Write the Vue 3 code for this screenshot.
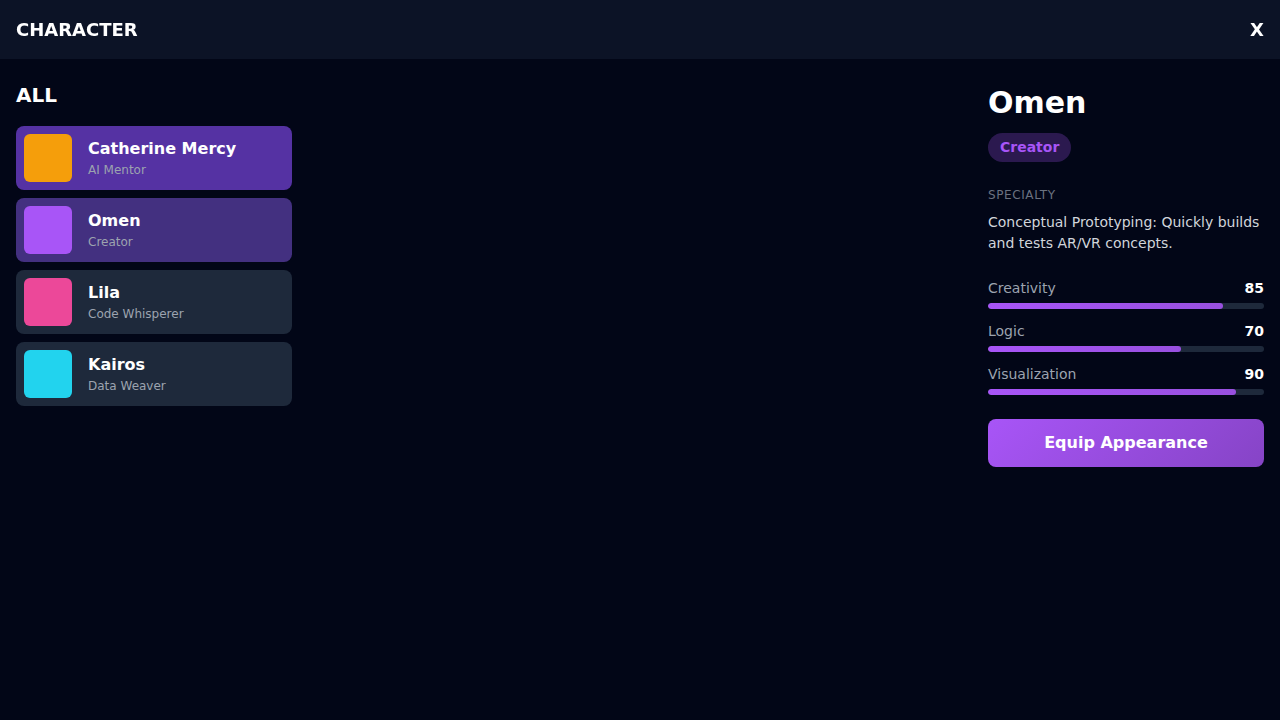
<script setup>
import { ref } from 'vue'

const characters = [
  { name: 'Catherine Mercy', role: 'AI Mentor', tone: 'amber', state: 'focused' },
  { name: 'Omen', role: 'Creator', tone: 'purple', state: 'selected' },
  { name: 'Lila', role: 'Code Whisperer', tone: 'pink', state: '' },
  { name: 'Kairos', role: 'Data Weaver', tone: 'cyan', state: '' }
]

const stats = ref([
  { label: 'Creativity', value: 85 },
  { label: 'Logic', value: 70 },
  { label: 'Visualization', value: 90 }
])
</script>

<template>
  <div class="screen">
    <header class="topbar">
      <h1 class="title">CHARACTER</h1>
      <button class="close" type="button" aria-label="Close">X</button>
    </header>

    <main class="layout">
      <section class="panel">
        <h2 class="group">ALL</h2>
        <ul class="list">
          <li v-for="c in characters" :key="c.name">
            <button type="button" class="card" :class="c.state">
              <span class="swatch" :class="c.tone"></span>
              <span class="info">
                <span class="name">{{ c.name }}</span>
                <span class="role">{{ c.role }}</span>
              </span>
            </button>
          </li>
        </ul>
      </section>

      <div class="stage"></div>

      <aside class="panel">
        <h2 class="hero">Omen</h2>
        <span class="badge">Creator</span>
        <h3 class="caption">SPECIALTY</h3>
        <p class="text">Conceptual Prototyping: Quickly builds and tests AR/VR concepts.</p>
        <div class="stats">
          <div v-for="s in stats" :key="s.label">
            <div class="row">
              <span class="label">{{ s.label }}</span>
              <span class="value">{{ s.value }}</span>
            </div>
            <div class="track">
              <div class="fill" :style="{ width: s.value + '%' }"></div>
            </div>
          </div>
        </div>
        <button type="button" class="equip">Equip Appearance</button>
      </aside>
    </main>
  </div>
</template>

<style>
body {
  margin: 0;
  background: #020617;
}
</style>

<style scoped>
.screen {
  min-height: 100vh;
  box-sizing: border-box;
  padding-top: 64px;
  background: #020617;
  color: #fff;
  font-family: "DejaVu Sans", sans-serif;
  font-size: 16px;
  line-height: 1.5;
}
h1, h2, h3, p, ul {
  margin: 0;
  padding: 0;
}
button {
  border: 0;
  margin: 0;
  font: inherit;
  color: inherit;
  cursor: pointer;
}
.topbar {
  position: fixed;
  top: 0;
  left: 0;
  right: 0;
  display: flex;
  justify-content: space-between;
  align-items: center;
  padding: 16px;
  background: rgba(15, 23, 42, 0.8);
  backdrop-filter: blur(8px);
}
.title,
.close {
  font-size: 18px;
  font-weight: 700;
  line-height: 27px;
}
.close {
  padding: 0;
  background: none;
}
.layout {
  display: grid;
  grid-template-columns: 308px 1fr 308px;
}
.panel {
  padding: 16px;
}
.group {
  margin-bottom: 16px;
  font-size: 20px;
  line-height: 30px;
}
.list {
  display: flex;
  flex-direction: column;
  gap: 8px;
  list-style: none;
}
.card {
  display: flex;
  align-items: center;
  gap: 16px;
  width: 100%;
  padding: 8px;
  border-radius: 8px;
  background: #1e293b;
  text-align: left;
}
.card.focused {
  background: #5532a3;
}
.card.selected {
  background: #433080;
}
.swatch {
  width: 48px;
  height: 48px;
  border-radius: 6px;
}
.amber { background: #f59e0b; }
.purple { background: #a855f7; }
.pink { background: #ec4899; }
.cyan { background: #22d3ee; }
.info {
  display: flex;
  flex-direction: column;
}
.name {
  font-weight: 600;
  line-height: 24px;
}
.role {
  font-size: 12px;
  line-height: 18px;
  color: #9ca3af;
}
.hero {
  margin-bottom: 8px;
  font-size: 30px;
  line-height: 45px;
}
.badge {
  display: block;
  width: fit-content;
  padding: 4px 12px;
  border-radius: 16px;
  background: rgba(168, 85, 247, 0.25);
  color: #a855f7;
  font-size: 14px;
  font-weight: 600;
  line-height: 21px;
}
.caption {
  margin: 24px 0 8px;
  font-size: 12px;
  font-weight: 400;
  line-height: 18px;
  letter-spacing: 0.05em;
  color: #6b7280;
}
.text {
  font-size: 14px;
  line-height: 21px;
  color: #d1d5db;
}
.stats {
  display: flex;
  flex-direction: column;
  gap: 12px;
  margin: 24px 0;
}
.row {
  display: flex;
  justify-content: space-between;
  margin-bottom: 4px;
  font-size: 14px;
  line-height: 21px;
}
.label {
  color: #9ca3af;
}
.value {
  font-weight: 600;
}
.track {
  height: 6px;
  border-radius: 3px;
  overflow: hidden;
  background: #1e293b;
}
.fill {
  height: 100%;
  border-radius: 3px;
  background: linear-gradient(90deg, #a855f7, #9850df);
}
.equip {
  width: 100%;
  padding: 12px;
  border-radius: 8px;
  background: linear-gradient(135deg, #a855f7, #8644c6);
  font-weight: 600;
  line-height: 24px;
}
</style>
